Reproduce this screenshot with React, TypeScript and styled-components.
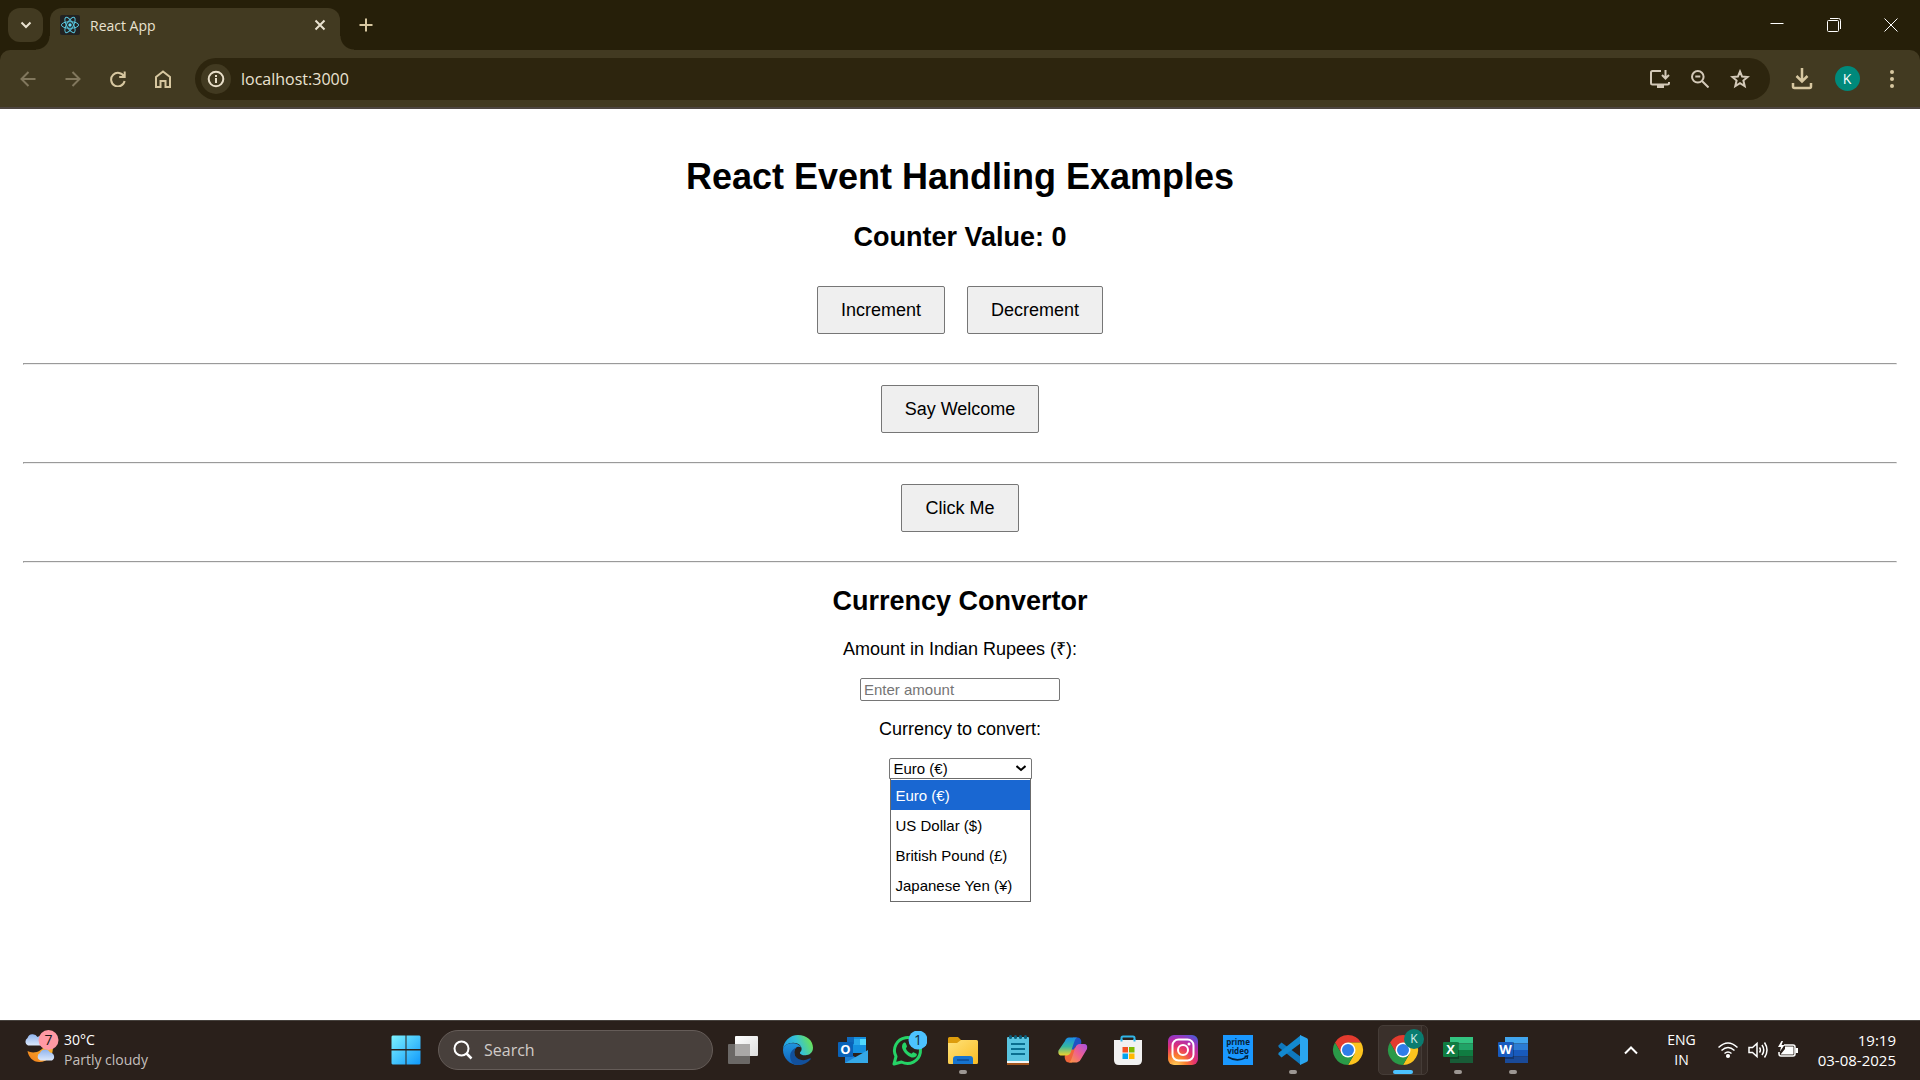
import React, { useState } from 'react';
import styled, { createGlobalStyle } from 'styled-components';

const UI = `"Open Sans", "Noto Sans", sans-serif`;
const PAGE = `"Liberation Sans", Arial, sans-serif`;

const GlobalStyle = createGlobalStyle`
  * { box-sizing: border-box; }
  body { margin: 0; background: #fff; }
  button { font: inherit; color: inherit; cursor: default; }
  svg { display: block; }
`;

const Screen = styled.div`
  min-height: 100vh;
  display: flex;
  flex-direction: column;
`;

/* ---------- browser frame ---------- */

const Frame = styled.header`
  background: #261f09;
  font-family: ${UI};
  color: #e9e2d0;
`;

const TabStrip = styled.div`
  height: 50px;
  display: flex;
  align-items: center;
  padding: 0 1px 0 8px;
`;

const TabSearch = styled.button`
  width: 35px;
  height: 34px;
  border: 0;
  border-radius: 12px;
  background: #423a21;
  display: grid;
  place-items: center;
  padding: 0;
`;

const Tab = styled.div`
  position: relative;
  align-self: flex-end;
  width: 290px;
  height: 42px;
  margin-left: 7px;
  padding: 0 10px;
  border-radius: 12px 12px 0 0;
  background: #423a21;
  display: flex;
  align-items: center;
  gap: 10px;
  padding-bottom: 8px;
  font-size: 14px;

  &::before,
  &::after {
    content: '';
    position: absolute;
    bottom: 0;
    width: 14px;
    height: 14px;
  }
  &::before {
    left: -14px;
    background: radial-gradient(circle at 0 0, transparent 13px, #423a21 14px);
  }
  &::after {
    right: -14px;
    background: radial-gradient(circle at 100% 0, transparent 13px, #423a21 14px);
  }
`;

const TabTitle = styled.span`
  flex: 1;
`;

const IconButton = styled.button<{ $w?: number; $h?: number; $color?: string }>`
  width: ${(p) => p.$w ?? 20}px;
  height: ${(p) => p.$h ?? 20}px;
  padding: 0;
  border: 0;
  background: none;
  color: ${(p) => p.$color ?? '#d7c7a0'};
  display: grid;
  place-items: center;
  flex: none;
`;

const NewTab = styled(IconButton)`
  margin-left: 12px;
`;

const WindowControls = styled.div`
  margin-left: auto;
  display: flex;
`;

const Toolbar = styled.div`
  height: 59px;
  background: #423a21;
  border-bottom: 2px solid #4d4540;
  border-radius: 10px 10px 0 0;
  display: flex;
  align-items: center;
  padding: 0 5px;
`;

const Omnibox = styled.div`
  flex: 1;
  height: 42px;
  margin: 0 9px 0 10px;
  padding: 0 10px 0 6px;
  border-radius: 21px;
  background: #2d250e;
  display: flex;
  align-items: center;
`;

const SiteInfo = styled.button`
  width: 30px;
  height: 30px;
  flex: none;
  border: 0;
  border-radius: 50%;
  padding: 0;
  background: #423a21;
  color: #e9dfca;
  display: grid;
  place-items: center;
`;

const Address = styled.input`
  flex: 1;
  min-width: 0;
  border: 0;
  background: none;
  outline: 0;
  padding: 0 10px;
  color: #ebe3d2;
  font: 16px ${UI};
`;

const Avatar = styled.span`
  width: 25px;
  height: 25px;
  border-radius: 50%;
  background: #00897b;
  color: #fff;
  font-size: 14px;
  line-height: 25px;
  text-align: center;
`;

/* ---------- page ---------- */

const Page = styled.main`
  flex: 1;
  padding: 47px 23px 0;
  font-family: ${PAGE};
  font-size: 18px;
  line-height: 20px;
  color: #000;
  text-align: center;
`;

const Title = styled.h1`
  margin: 0 0 24px;
  font-size: 36px;
  line-height: 42px;
`;

const Heading = styled.h2`
  margin: 0;
  font-size: 27px;
  line-height: 30px;
`;

const ButtonRow = styled.div<{ $top: number }>`
  display: flex;
  justify-content: center;
  gap: 22px;
  padding: ${(p) => p.$top}px 0 29px;
`;

const PageButton = styled.button`
  height: 48px;
  padding: 0 23px;
  border: 1px solid #767676;
  border-radius: 2px;
  background: #efefef;
`;

const Rule = styled.hr`
  margin: 0;
  border: 1px solid;
  border-color: #9a9a9a #eee #eee #9a9a9a;
`;

const Form = styled.form`
  display: flex;
  flex-direction: column;
  align-items: center;
  padding-top: 23px;
`;

const Label = styled.label<{ $top: number }>`
  margin: ${(p) => p.$top}px 0 19px;
`;

const AmountInput = styled.input`
  width: 200px;
  height: 23px;
  border: 1px solid #767676;
  border-radius: 2px;
  padding: 0 3px;
  font: 15px ${PAGE};

  &::placeholder {
    color: #757575;
  }
`;

const SelectBox = styled.div`
  position: relative;
  width: 143px;
`;

const CurrencySelect = styled.select`
  display: block;
  width: 100%;
  height: 21px;
  appearance: none;
  border: 1px solid #767676;
  border-radius: 2px 2px 0 0;
  background: #fff;
  padding: 0 4px;
  font: 15px ${PAGE};
  color: #000;
`;

const SelectArrow = styled.svg`
  position: absolute;
  right: 6px;
  top: 7px;
  pointer-events: none;
`;

const Options = styled.ul`
  position: absolute;
  top: 20px;
  left: 1px;
  right: 1px;
  margin: 0;
  padding: 1px 0;
  list-style: none;
  border: 1px solid #6b6b6b;
  background: #fff;
  font-size: 15px;
  text-align: left;
`;

const Option = styled.li<{ $active: boolean }>`
  height: 30px;
  line-height: 32px;
  padding: 0 5px;
  background: ${(p) => (p.$active ? '#1967d2' : '#fff')};
  color: ${(p) => (p.$active ? '#fff' : '#000')};
  white-space: nowrap;
`;

/* ---------- taskbar ---------- */

const Taskbar = styled.footer`
  height: 60px;
  padding-bottom: 2px;
  border-top: 1px solid #46413d;
  background: #2a201b;
  color: #fff;
  font-family: ${UI};
  font-size: 14px;
  line-height: 20px;
  display: grid;
  grid-template-columns: 1fr auto 1fr;
  align-items: center;
`;

const Weather = styled.button`
  justify-self: start;
  display: flex;
  align-items: center;
  gap: 4px;
  margin-left: 24px;
  padding: 0;
  border: 0;
  background: none;
  text-align: left;
`;

const Muted = styled.span`
  color: #c4bfbc;
`;

const Stack = styled.span<{ $align?: string }>`
  display: flex;
  flex-direction: column;
  text-align: ${(p) => p.$align ?? 'left'};
`;

const Apps = styled.nav`
  display: flex;
  align-items: center;
  margin-right: 2px;
`;

const SearchBox = styled.label`
  width: 275px;
  height: 40px;
  margin: 0 2px 0 5px;
  padding: 0 14px;
  border: 1px solid #655c58;
  border-radius: 20px;
  background: #48403c;
  display: flex;
  align-items: center;
  gap: 11px;
`;

const SearchInput = styled.input`
  min-width: 0;
  flex: 1;
  border: 0;
  padding: 0;
  outline: 0;
  background: none;
  color: #fff;
  font: 16px ${UI};

  &::placeholder {
    color: #d0cbc8;
    opacity: 1;
  }
`;

const AppButton = styled.button<{ $active?: boolean }>`
  position: relative;
  width: 55px;
  height: 50px;
  padding: 0;
  border: 0;
  background: none;
  display: grid;
  place-items: center;

  &::before {
    content: '';
    display: ${(p) => (p.$active ? 'block' : 'none')};
    position: absolute;
    inset: 0 2px 0 3px;
    border: 1px solid #453c37;
    border-radius: 5px;
    background: linear-gradient(90deg, #3a302b 42px, #453c37 42px, #453c37 43px, #332924 43px);
  }

  & > svg {
    position: relative;
  }
`;

const Indicator = styled.span<{ $active?: boolean }>`
  position: absolute;
  bottom: 1px;
  left: 50%;
  transform: translateX(-50%);
  width: ${(p) => (p.$active ? 20 : 8)}px;
  height: 4px;
  border-radius: 2px;
  background: ${(p) => (p.$active ? '#4cc2ff' : '#9d9793')};
`;

const Tray = styled.div`
  justify-self: end;
  display: flex;
  align-items: center;
  padding-right: 24px;
`;

const TrayGroup = styled.div`
  display: flex;
  align-items: center;
  gap: 10px;
  margin: 0 20px 0 22px;
`;

const Language = styled(Stack)`
  margin-left: 26px;
`;

const Clock = styled(Stack)`
  font-size: 15px;
`;

/* ---------- icons ---------- */

type LineProps = { size?: number; w?: number; children: React.ReactNode };

const Line = ({ size = 20, w = 2, children }: LineProps) => (
  <svg width={size} height={size} viewBox={`0 0 ${size} ${size}`} fill="none" stroke="currentColor" strokeWidth={w}>
    {children}
  </svg>
);

const ReactLogo = () => (
  <svg width="20" height="20" viewBox="0 0 20 20">
    <rect width="20" height="20" rx="2" fill="#222" />
    <circle cx="10" cy="10" r="1.7" fill="#61dafb" />
    <g fill="none" stroke="#58c4dc" strokeWidth="1">
      <ellipse cx="10" cy="10" rx="8.6" ry="3.3" />
      <ellipse cx="10" cy="10" rx="8.6" ry="3.3" transform="rotate(60 10 10)" />
      <ellipse cx="10" cy="10" rx="8.6" ry="3.3" transform="rotate(120 10 10)" />
    </g>
  </svg>
);

const WeatherIcon = () => (
  <svg width="36" height="40" viewBox="0 0 36 40">
    <defs>
      <linearGradient id="cloud" x1="0" y1="0" x2="0" y2="1">
        <stop offset="0" stopColor="#8fb4ee" />
        <stop offset="1" stopColor="#dce8fb" />
      </linearGradient>
      <linearGradient id="moon" x1="0" y1="1" x2="1" y2="0">
        <stop offset="0" stopColor="#f07c1c" />
        <stop offset="1" stopColor="#fbc02d" />
      </linearGradient>
    </defs>
    <path d="M3.500 21c5 3 15 2 19-9l6 4c2 9-5 16-13 16-7 0-11-5-12-11z" fill="url(#moon)" />
    <path d="M4 15.500a4.200 4.200 0 0 1-.500-7.500A5.500 5.500 0 0 1 13.500 7a5 5 0 0 1 6 8.500z" fill="url(#cloud)" />
    <path d="M16.500 30.500a4 4 0 0 1-.500-7.500 5.500 5.500 0 0 1 10-.5 4.300 4.300 0 0 1 2 8z" fill="url(#cloud)" />
    <circle cx="24.500" cy="10" r="10" fill="#ff99a4" />
    <text x="24.500" y="15" textAnchor="middle" fontSize="14" fontFamily="Open Sans" fill="#1a1a1a">7</text>
  </svg>
);

const StartIcon = () => (
  <svg width="30" height="30" viewBox="0 0 30 30">
    <defs>
      <linearGradient id="win" x1="0" y1="0" x2="1" y2="1" >
        <stop offset="0" stopColor="#7df3ff" />
        <stop offset="1" stopColor="#0f98fb" />
      </linearGradient>
    </defs>
    <path d="M1.500 .5H14.500V14H.5V1.500zM15.500 .5H28.500l1 1V14H15.500zM.5 15.500H14.500V29.500H1.500l-1-1zM15.500 15.500H29.500V28.500l-1 1H15.500z" fill="url(#win)" />
  </svg>
);

const TaskViewIcon = () => (
  <svg width="30" height="30" viewBox="0 0 30 30">
    <defs>
      <linearGradient id="tv" x1="0" y1="0" x2="1" y2="1">
        <stop offset="0" stopColor="#fff" />
        <stop offset="1" stopColor="#ddd" />
      </linearGradient>
    </defs>
    <rect y="9" width="22" height="20" rx="1" fill="#6b6866" />
    <rect x="7" y="1" width="23" height="20" rx="1" fill="url(#tv)" />
    <path d="M7 9H22V21H7z" fill="#aaa8a7" />
  </svg>
);

const EdgeIcon = () => (
  <svg width="30" height="30" viewBox="0 0 24 24">
    <defs>
      <linearGradient id="e1" x1="0" y1=".6" x2="1" y2=".3">
        <stop offset="0" stopColor="#1e9de7" />
        <stop offset=".5" stopColor="#35c1d8" />
        <stop offset="1" stopColor="#6fe64b" />
      </linearGradient>
      <linearGradient id="e2" x1="0" y1="0" x2="0" y2="1">
        <stop offset="0" stopColor="#1f96e0" />
        <stop offset="1" stopColor="#1160b8" />
      </linearGradient>
    </defs>
    <path d="M0 12C0 5 5.500 0 12 0c7 0 12 4.500 12 10.200 0 3.800-3 6-6 6-3 0-4.500-1.100-4.500-1.900 0-.7 1.400-1.200 1.400-3.200 0-2.800-3-5-6.700-5C4 6.100 0 8.500 0 12z" fill="url(#e1)" />
    <path d="M0 12c0-3.500 3.600-5.500 7.500-5.500 3.500 0 6.300 1.500 7.200 3.500-2.500-1.500-5.700 0-5.700 4 0 4.500 3.600 7.500 8 7.500-1.500 1.600-3.400 2.500-5 2.500C5.500 24 0 18.500 0 12z" fill="url(#e2)" />
    <path d="M9 23.600C6.600 22 5.700 19.500 5.700 17c0-3.400 2.300-6.100 5.200-7.100C9.500 11 9 12.500 9 14.200c0 4.300 5.300 6.800 9.500 5.600 1.700-.5 2.700-1.300 3.400-1.200.5.100.4.600.1 1-2.800 3.600-8 5.200-13 4z" fill="#12509c" />
  </svg>
);

const OutlookIcon = () => (
  <svg width="30" height="30" viewBox="0 0 30 30">
    <path d="M9 2h19v16H9z" fill="#1490df" />
    <path d="M9 2h7v7H9z" fill="#0f6abd" />
    <path d="M16 4h6v6h-6z" fill="#28a8ea" />
    <path d="M22 4h6v6h-6z" fill="#50d9ff" />
    <path d="M7 28V17l12 6 11-7v12z" fill="#1a7fd4" />
    <path d="M7 28 30 15v13z" fill="#35a9e8" />
    <rect y="7" width="15" height="15" rx="1" fill="#0a62b8" />
    <text x="7.500" y="19" textAnchor="middle" fontSize="13" fontWeight="700" fontFamily="Open Sans" fill="#fff">O</text>
  </svg>
);

const WhatsAppIcon = () => (
  <svg width="38" height="38" viewBox="0 0 38 38" >
    <path d="M5 33l2-7.500A13 13 0 1 1 12.500 31z" fill="none" stroke="#25d366" strokeWidth="3" strokeLinejoin="round" />
    <path d="M14.500 12c.9-.6 2-.5 2.300.2l1.200 3c.2.700-1.300 2-1.100 2.500 1.200 2.400 3 4 5.200 4.900.7.300 1.700-1.700 2.400-1.400l3 1.500c.8.500.2 2.200-.6 2.900-2.600 2-6 .6-9-1.900-3-2.600-5.400-6.300-4.800-9 .3-1.200.7-2.200 1.400-2.700z" fill="#25d366" />
    <circle cx="29" cy="9" r="9.500" fill="#4cc2ff" />
    <text x="29" y="14" textAnchor="middle" fontSize="14" fontFamily="Open Sans" fill="#102a38">1</text>
  </svg>
);

const ExplorerIcon = () => (
  <svg width="30" height="30" viewBox="0 0 30 30">
    <defs>
      <linearGradient id="fold" x1="0" y1="0" x2="1" y2="1">
        <stop offset="0" stopColor="#ffe27a" />
        <stop offset="1" stopColor="#f9bc24" />
      </linearGradient>
    </defs>
    <path d="M0 3.500Q0 2 1.500 2H10l3 3h15v6H0z" fill="#dd9c0c" />
    <path d="M0 8h9l4-3h15.500Q30 5 30 6.500V27.500Q30 29 28.500 29h-27Q0 29 0 27.500z" fill="url(#fold)" />
    <path d="M5 29V24q0-3 3-3h14q3 0 3 3v5z" fill="#1673cf" />
    <path d="M9 25h12" stroke="#0c4a93" strokeWidth="1.500" />
  </svg>
);

const NotepadIcon = () => (
  <svg width="30" height="30" viewBox="0 0 30 30">
    <path d="M4 27h22v3H4z" fill="#a3551c" />
    <path d="M4 25h22v3H4z" fill="#f4f4f4" />
    <path d="M4 3q0-1 1-1h20q1 0 1 1v23H4z" fill="#59c4e0" />
    <g fill="#0b5f7c">
      <rect x="6" y="0" width="3" height="4" rx="1.500" />
      <rect x="11" y="0" width="3" height="4" rx="1.500" />
      <rect x="16" y="0" width="3" height="4" rx="1.500" />
      <rect x="21" y="0" width="3" height="4" rx="1.500" />
    </g>
    <path d="M8 9h14M8 14h14M8 19h14" stroke="#0b6f90" strokeWidth="2" />
  </svg>
);

const CopilotIcon = () => (
  <svg width="30" height="30" viewBox="0 0 30 30">
    <defs>
      <linearGradient id="c1" x1="0" y1="0" x2="0" y2="1">
        <stop offset="0" stopColor="#1a8ee8" />
        <stop offset=".5" stopColor="#35b7a0" />
        <stop offset="1" stopColor="#f2d32c" />
      </linearGradient>
      <linearGradient id="c2" x1="1" y1="0" x2="0" y2="1">
        <stop offset="0" stopColor="#a550e6" />
        <stop offset=".5" stopColor="#ef5f8f" />
        <stop offset="1" stopColor="#fb9a3c" />
      </linearGradient>
    </defs>
    <path d="M8 20q-2 0-1 4 1 3.500 4 3.500h3l4-15h-4z" fill="#f0653a" />
    <path d="M22 10q2-1 1-5-1-2.500-3-2.500h-5l-3 12h4q1-4.500 6-4.500z" fill="#1e53c4" />
    <path d="M7 6q1-3.500 4-3.500h8q-2 1-3 5l-3 9q-1 4-5 4H4q-4.500 0-3.500-5z" fill="url(#c1)" />
    <path d="M23 24q-1 3-4 3.500h-8q2-1 3-5l3-9q1-4.500 5-4.500h4q4 0 3 5z" fill="url(#c2)" />
  </svg>
);

const StoreIcon = () => (
  <svg width="30" height="30" viewBox="0 0 30 30">
    <path d="M8.500 8V3q0-1.500 1.500-1.500h10q1.500 0 1.500 1.500v5" fill="none" stroke="#30b6e8" strokeWidth="2" />
    <path d="M1 5h28v20q0 5-5 5H6q-5 0-5-5z" fill="#f1f1f1" />
    <path d="M8.500 6.500V4M21.500 6.500V4" stroke="#30b6e8" strokeWidth="2" />
    <path d="M9.500 12H15v5.500H9.500z" fill="#f25022" />
    <path d="M16 12h5.500v5.500H16z" fill="#7fba00" />
    <path d="M9.500 18.500H15V24H9.500z" fill="#00a4ef" />
    <path d="M16 18.500h5.500V24H16z" fill="#ffb900" />
  </svg>
);

const InstagramIcon = () => (
  <svg width="30" height="30" viewBox="0 0 30 30">
    <defs>
      <radialGradient id="ig" cx=".25" cy="1.050" r="1.200">
        <stop offset="0" stopColor="#ffd860" />
        <stop offset=".3" stopColor="#fa7e2e" />
        <stop offset=".55" stopColor="#e5316e" />
        <stop offset=".8" stopColor="#a82fb8" />
        <stop offset="1" stopColor="#4d5bd8" />
      </radialGradient>
    </defs>
    <rect width="30" height="30" rx="6" fill="url(#ig)" />
    <rect x="4.500" y="4.500" width="21" height="21" rx="6" fill="none" stroke="#fff" strokeWidth="2" />
    <circle cx="15" cy="15" r="5" fill="none" stroke="#fff" strokeWidth="2" />
    <circle cx="21" cy="9" r="1.500" fill="#fff" />
  </svg>
);

const PrimeIcon = () => (
  <svg width="30" height="30" viewBox="0 0 30 30">
    <rect width="30" height="30" fill="#1a98ff" />
    <g fontFamily="Open Sans" fontWeight="700" fontSize="8" fill="#062138" textAnchor="middle">
      <text x="15" y="10">prime</text>
      <text x="15" y="19">video</text>
    </g>
    <path d="M5 22q9 5.500 18 .5M21.500 21.500l3-.5-.5 3" fill="none" stroke="#062138" strokeWidth="1.500" />
  </svg>
);

const CodeIcon = () => (
  <svg width="30" height="30" viewBox="0 0 30 30">
    <path d="M.5 10.500 3.500 7.500 23 22v8L1 12.500q-1-1-.5-2z" fill="#0f78bd" />
    <path d="M.5 19.500 3.500 22.500 23 8V0L1 17.500q-1 1-.5 2z" fill="#1389d0" />
    <path d="M22 0l6.500 3q1.500.7 1.500 2v20q0 1.300-1.500 2L22 30z" fill="#2aa6f0" />
  </svg>
);

const ChromeIcon = ({ badge = false }: { badge?: boolean }) => (
  <svg width="44" height="44" viewBox="-22 -22 44 44">
    <path d="M-13-7.500A15 15 0 0 1 13-7.500H0L-6.500 3.800z" fill="#e33b2e" />
    <path d="M13-7.500A15 15 0 0 1 0 15L6.500 3.700 0-7.500z" fill="#fcc31e" />
    <path d="M0 15A15 15 0 0 1-13-7.500L-6.500 3.800 6.500 3.800z" fill="#2a9a48" />
    <circle r="7.500" fill="#fff" />
    <circle r="6" fill="#2f7de9" />
    {badge && (
      <>
        <circle cx="11" cy="-11" r="10" fill="#0a7c70" />
        <text x="11" y="-7" textAnchor="middle" fontSize="12" fontFamily="Open Sans" fill="#d5efec">K</text>
      </>
    )}
  </svg>
);

type OfficeProps = { letter: string; shades: string[]; tile: string };

const OfficeIcon = ({ letter, shades, tile }: OfficeProps) => (
  <svg width="30" height="30" viewBox="0 0 30 30">
    {shades.map((shade, i) => (
      <rect key={shade} x="7" y={2 + i * 6.5} width="23" height="6.500" fill={shade} />
    ))}
    <path d="M7 7h9v17H7z" fill="#000" opacity=".25" />
    <rect y="7" width="15" height="15" rx="1" fill={tile} />
    <text x="7.500" y="19" textAnchor="middle" fontSize="13" fontWeight="700" fontFamily="Open Sans" fill="#fff">{letter}</text>
  </svg>
);

const currencies = ['Euro (€)', 'US Dollar ($)', 'British Pound (£)', 'Japanese Yen (¥)'];

const apps: { name: string; icon: React.ReactNode; running?: boolean; active?: boolean }[] = [
  { name: 'Task view', icon: <TaskViewIcon /> },
  { name: 'Edge', icon: <EdgeIcon /> },
  { name: 'Outlook', icon: <OutlookIcon /> },
  { name: 'WhatsApp', icon: <WhatsAppIcon /> },
  { name: 'File Explorer', icon: <ExplorerIcon />, running: true },
  { name: 'Notepad', icon: <NotepadIcon /> },
  { name: 'Copilot', icon: <CopilotIcon /> },
  { name: 'Store', icon: <StoreIcon /> },
  { name: 'Instagram', icon: <InstagramIcon /> },
  { name: 'Prime Video', icon: <PrimeIcon /> },
  { name: 'Visual Studio Code', icon: <CodeIcon />, running: true },
  { name: 'Chrome', icon: <ChromeIcon /> },
  { name: 'Chrome profile', icon: <ChromeIcon badge />, running: true, active: true },
  { name: 'Excel', icon: <OfficeIcon letter="X" tile="#107c41" shades={['#33c481', '#21a366', '#107c41', '#185c37']} />, running: true },
  { name: 'Word', icon: <OfficeIcon letter="W" tile="#185abd" shades={['#41a5ee', '#2b7cd3', '#185abd', '#1a4a98']} />, running: true },
];

const BrowserFrame = () => (
  <Frame>
    <TabStrip>
      <TabSearch aria-label="Search tabs">
        <Line size={12}><path d="M1.500 3.500 6 8l4.500-4.500" /></Line>
      </TabSearch>
      <Tab>
        <ReactLogo />
        <TabTitle>React App</TabTitle>
        <IconButton aria-label="Close tab" $color="#e9e2d0">
          <Line size={12}><path d="M1.500 1.500l9 9M10.500 1.500l-9 9" /></Line>
        </IconButton>
      </Tab>
      <NewTab aria-label="New tab" $w={28} $h={28}>
        <Line size={14}><path d="M7 .5v13M.5 7h13" /></Line>
      </NewTab>
      <WindowControls>
        <IconButton aria-label="Minimize" $w={57} $h={50} $color="#fff">
          <Line size={14} w={1}><path d="M.5 5.500h13" /></Line>
        </IconButton>
        <IconButton aria-label="Restore" $w={57} $h={50} $color="#fff">
          <Line size={14} w={1}>
            <rect x=".5" y="2.500" width="11" height="11" rx="1" />
            <path d="M3 .5h8.500q2 0 2 2V11" />
          </Line>
        </IconButton>
        <IconButton aria-label="Close" $w={57} $h={50} $color="#fff">
          <Line size={14} w={1}><path d="M.5 .5l13 13M13.500 .5l-13 13" /></Line>
        </IconButton>
      </WindowControls>
    </TabStrip>
    <Toolbar>
      <IconButton aria-label="Back" $w={45} $h={40} $color="#81775d">
        <Line size={16}><path d="M15.500 8H2M8.500 1 1.500 8l7 7" /></Line>
      </IconButton>
      <IconButton aria-label="Forward" $w={45} $h={40} $color="#81775d">
        <Line size={16}><path d="M.5 8H14M7.500 1l7 7-7 7" /></Line>
      </IconButton>
      <IconButton aria-label="Reload" $w={45} $h={40}>
        <Line size={16}><path d="M14 5.500A6.800 6.800 0 1 0 14.600 10M14.700.5V6H9.200" /></Line>
      </IconButton>
      <IconButton aria-label="Home" $w={45} $h={40}>
        <Line size={18}><path d="M2 7l7-5.500L16 7v10h-4.500v-6h-5v6H2z" /></Line>
      </IconButton>
      <Omnibox>
        <SiteInfo aria-label="Site information">
          <Line size={18}><circle cx="9" cy="9" r="7.300" /><path d="M9 8v5M9 5v2" /></Line>
        </SiteInfo>
        <Address aria-label="Address" defaultValue="localhost:3000" />
        <IconButton aria-label="Install app" $w={40} $h={40} $color="#d3c9b8">
          <Line size={22}>
            <path d="M12 3H3.500Q2 3 2 4.500V15q0 1.500 1.500 1.500h15q1.500 0 1.500-1.500v-1M16.500 2v8M13 7l3.500 3.500L20 7" />
            <path d="M8 18.500h7" strokeWidth="3" />
          </Line>
        </IconButton>
        <IconButton aria-label="Zoom" $w={40} $h={40} $color="#d3c9b8">
          <Line size={18}><circle cx="6.800" cy="6.800" r="5.800" /><path d="M11 11l6.500 6.500M4.300 6.500h5" /></Line>
        </IconButton>
        <IconButton aria-label="Bookmark" $w={40} $h={40} $color="#d3c9b8">
          <Line size={20}><path d="M10 2.500l2.100 5.100 5.500.4-4.200 3.600 1.300 5.400-4.700-2.900L5.300 17l1.300-5.400L2.400 8l5.500-.4z" /></Line>
        </IconButton>
      </Omnibox>
      <IconButton aria-label="Downloads" $w={46} $h={40}>
        <Line size={22} w={3}><path d="M11 0v13M5.500 8 11 13.500 16.500 8M2 15v3.500Q2 20 3.500 20h15q1.500 0 1.500-1.500V15" strokeWidth="2.500" /></Line>
      </IconButton>
      <IconButton aria-label="Profile" $w={44} $h={40}><Avatar>K</Avatar></IconButton>
      <IconButton aria-label="Menu" $w={46} $h={40}>
        <svg width="4" height="18" fill="currentColor"><circle cx="2" cy="2" r="2" /><circle cx="2" cy="9" r="2" /><circle cx="2" cy="16" r="2" /></svg>
      </IconButton>
    </Toolbar>
  </Frame>
);

const Examples = () => {
  const [count, setCount] = useState(0);
  const [currency, setCurrency] = useState(currencies[0]);
  return (
    <Page>
      <Title>React Event Handling Examples</Title>
      <Heading>Counter Value: {count}</Heading>
      <ButtonRow $top={34}>
        <PageButton onClick={() => setCount(count + 1)}>Increment</PageButton>
        <PageButton onClick={() => setCount(count - 1)}>Decrement</PageButton>
      </ButtonRow>
      <Rule />
      <ButtonRow $top={20}><PageButton>Say Welcome</PageButton></ButtonRow>
      <Rule />
      <ButtonRow $top={20}><PageButton>Click Me</PageButton></ButtonRow>
      <Rule />
      <Form>
        <Heading>Currency Convertor</Heading>
        <Label $top={23} htmlFor="amount">Amount in Indian Rupees (₹):</Label>
        <AmountInput id="amount" placeholder="Enter amount" />
        <Label $top={18} htmlFor="currency">Currency to convert:</Label>
        <SelectBox>
          <CurrencySelect id="currency" value={currency} onChange={(e) => setCurrency(e.target.value)}>
            {currencies.map((c) => <option key={c}>{c}</option>)}
          </CurrencySelect>
          <SelectArrow width="10" height="8" viewBox="0 0 10 8" fill="none" stroke="#000" strokeWidth="2">
            <path d="M.5 1l4.500 4 4.500-4" />
          </SelectArrow>
          <Options role="listbox" aria-label="Currencies">
            {currencies.map((c) => (
              <Option key={c} role="option" aria-selected={c === currency} $active={c === currency} onClick={() => setCurrency(c)}>
                {c}
              </Option>
            ))}
          </Options>
        </SelectBox>
      </Form>
    </Page>
  );
};

const WindowsTaskbar = () => (
  <Taskbar>
    <Weather>
      <WeatherIcon />
      <Stack><span>30°C</span><Muted>Partly cloudy</Muted></Stack>
    </Weather>
    <Apps>
      <AppButton aria-label="Start"><StartIcon /></AppButton>
      <SearchBox>
        <Line size={20}><circle cx="8.500" cy="8.500" r="7" /><path d="M13.500 13.500l5 5" strokeWidth="2.500" /></Line>
        <SearchInput placeholder="Search" aria-label="Search" />
      </SearchBox>
      {apps.map((app) => (
        <AppButton key={app.name} aria-label={app.name} $active={app.active}>
          {app.icon}
          {app.running && <Indicator $active={app.active} />}
        </AppButton>
      ))}
    </Apps>
    <Tray>
      <IconButton aria-label="Hidden icons" $color="#fff">
        <Line size={14}><path d="M1 10.500 7 4.500l6 6" /></Line>
      </IconButton>
      <Language $align="center"><span>ENG</span><span>IN</span></Language>
      <TrayGroup>
        <Line size={20} w={1.5}>
          <path d="M.5 7.500q9.500-9 19 0M3.500 10.500q6.500-6 13 0M6.500 13.500q3.500-3 7 0" />
          <circle cx="10" cy="16" r="1.300" fill="currentColor" />
        </Line>
        <Line size={20} w={1.5}>
          <path d="M1 7.500h3.500L9 3.500v13l-4.500-4H1zM11.500 7.500q1.800 2.500 0 5M14 5q3.500 5 0 10M16.500 2.500q5 7.500 0 15" />
        </Line>
        <Line size={20} w={1.5}>
          <path d="M6 5h9q2 0 2 2v7q0 2-2 2H3q-2 0-2-2v-2" />
          <path d="M7 6.500h8.500v8H2.500L7 9z" fill="currentColor" stroke="none" />
          <path d="M17.500 8h2.500v5h-2.500zM3.500 1 0 7h3l-1 4.500L6.500 5h-3l1.500-4z" fill="currentColor" stroke="none" />
        </Line>
      </TrayGroup>
      <Clock $align="right"><span>19:19</span><span>03-08-2025</span></Clock>
    </Tray>
  </Taskbar>
);

export default function App() {
  return (
    <Screen>
      <GlobalStyle />
      <BrowserFrame />
      <Examples />
      <WindowsTaskbar />
    </Screen>
  );
}
